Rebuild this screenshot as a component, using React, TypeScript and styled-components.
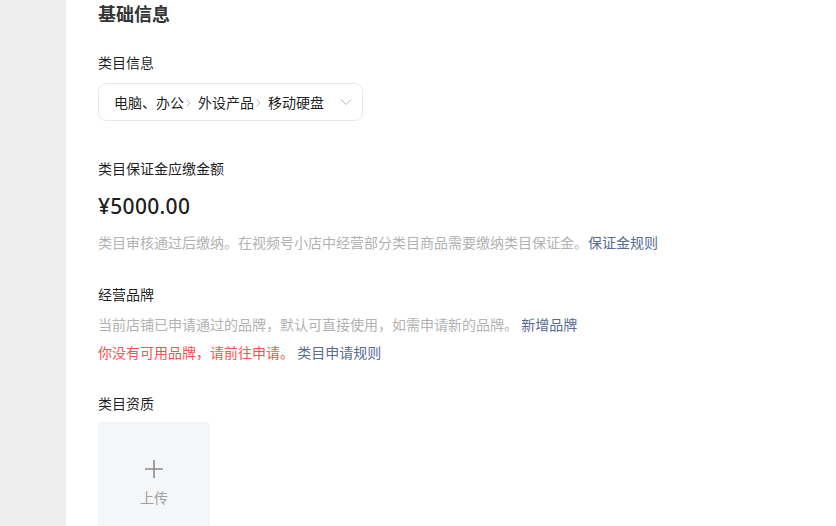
import React from "react";
import styled, { createGlobalStyle } from "styled-components";

const GlobalStyle = createGlobalStyle`
    html, body {
        margin: 0;
        padding: 0;
        background: #ffffff;
        font-family: "Noto Sans CJK SC", "Noto Sans", sans-serif;
    }
`;

const Page = styled.div`
    display: flex;
    width: 836px;
    height: 526px;
    overflow: hidden;
`;

const Sidebar = styled.aside`
    width: 66px;
    flex-shrink: 0;
    background: #ededed;
`;

const Main = styled.main`
    flex: 1;
    padding: 0 0 0 32px;
    display: flex;
    flex-direction: column;
    align-items: flex-start;
    color: rgba(0, 0, 0, 0.9);

    & > * {
        flex-shrink: 0;
    }
`;

const Title = styled.h2`
    margin: 0;
    font-size: 18px;
    line-height: 26px;
    font-weight: 700;
    color: #333333;
`;

const Label = styled.div<{ top: number }>`
    margin-top: ${({ top }) => top}px;
    font-size: 14px;
    line-height: 20px;
    color: rgba(0, 0, 0, 0.9);
`;

const Select = styled.div`
    margin-top: 11px;
    box-sizing: border-box;
    width: 265px;
    height: 38px;
    border: 1px solid #e8e8e8;
    border-radius: 8px;
    padding: 0 10px 0 15px;
    display: flex;
    align-items: center;
    font-size: 14px;
    color: rgba(0, 0, 0, 0.9);
`;

const Crumb = styled.span`
    white-space: nowrap;
`;

const Sep = styled.svg`
    width: 6px;
    height: 10px;
    margin: 1px 7px 0 1px;
    flex-shrink: 0;
`;

const Caret = styled.svg`
    width: 12px;
    height: 8px;
    margin-left: auto;
`;

const Amount = styled.div`
    margin-top: 14px;
    font-family: "Noto Sans", "Noto Sans CJK SC", sans-serif;
    font-size: 21px;
    line-height: 28px;
    font-weight: 500;
    letter-spacing: 0.3px;
    color: rgba(0, 0, 0, 0.9);
`;

const Hint = styled.div<{ top: number; tone?: "gray" | "red" }>`
    margin-top: ${({ top }) => top}px;
    font-size: 14px;
    line-height: 20px;
    white-space: nowrap;
    color: ${({ tone }) => (tone === "red" ? "#fa5151" : "#b2b2b2")};
`;

const Link = styled.a`
    color: #576b95;
    text-decoration: none;
    cursor: pointer;
`;

const Upload = styled.div`
    margin-top: 9px;
    width: 112px;
    height: 112px;
    border-radius: 4px;
    background: #f5f6f7;
    display: flex;
    flex-direction: column;
    align-items: center;
    padding-top: 37px;
    box-sizing: border-box;
    color: #a0a0a0;
    font-size: 14px;
`;

const PlusIcon = styled.svg`
    width: 20px;
    height: 20px;
`;

const UploadText = styled.span`
    margin-top: 8px;
    line-height: 20px;
`;

const Chevron = () => (
    <Sep viewBox="0 0 6 10">
        <path d="M1.5 1.5 L5 5 L1.5 8.5" fill="none" stroke="#bcbcbc" strokeWidth="1" />
    </Sep>
);

const App = () => {
    return (
        <Page>
            <GlobalStyle />
            <Sidebar />
            <Main>
                <Title>基础信息</Title>

                <Label top={26}>类目信息</Label>
                <Select>
                    <Crumb>电脑、办公</Crumb>
                    <Chevron />
                    <Crumb>外设产品</Crumb>
                    <Chevron />
                    <Crumb>移动硬盘</Crumb>
                    <Caret viewBox="0 0 12 8">
                        <path d="M1 1.5 L6 6.5 L11 1.5" fill="none" stroke="#b2b2b2" strokeWidth="1" />
                    </Caret>
                </Select>

                <Label top={37}>类目保证金应缴金额</Label>
                <Amount>¥5000.00</Amount>
                <Hint top={12}>
                    类目审核通过后缴纳。在视频号小店中经营部分类目商品需要缴纳类目保证金。
                    <Link>保证金规则</Link>
                </Hint>

                <Label top={32}>经营品牌</Label>
                <Hint top={10}>
                    当前店铺已申请通过的品牌，默认可直接使用，如需申请新的品牌。 <Link>新增品牌</Link>
                </Hint>
                <Hint top={8} tone="red">
                    你没有可用品牌，请前往申请。 <Link>类目申请规则</Link>
                </Hint>

                <Label top={31}>类目资质</Label>
                <Upload>
                    <PlusIcon viewBox="0 0 20 20">
                        <path d="M10 1 V19 M1 10 H19" stroke="#8c8c8c" strokeWidth="1.6" fill="none" />
                    </PlusIcon>
                    <UploadText>上传</UploadText>
                </Upload>
            </Main>
        </Page>
    );
};

export default App;
